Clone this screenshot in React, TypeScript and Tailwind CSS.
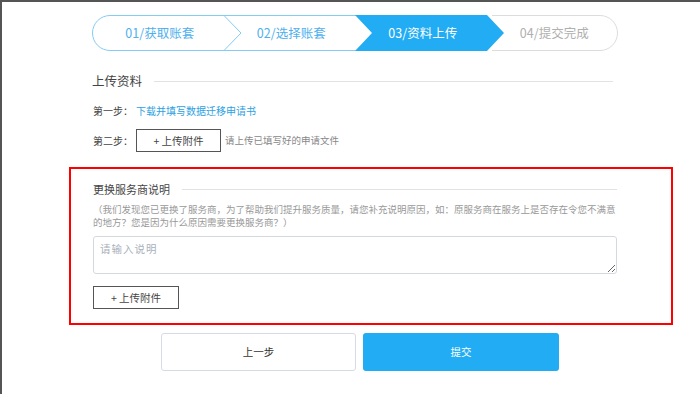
const font = { fontFamily: '"Noto Sans CJK SC", "Noto Sans", sans-serif' }

const steps = [
  { label: '01/获取账套', cls: 'text-[#4fb0ee]' },
  { label: '02/选择账套', cls: 'text-[#4fb0ee]' },
  { label: '03/资料上传', cls: 'text-white' },
  { label: '04/提交完成', cls: 'text-[#b0b0b0]' },
]

const Stepper = () => (
  <div className="relative w-[526px] h-[36px]">
    {/* chevron background */}
    <svg className="absolute inset-0" width="526" height="36" viewBox="0 0 526 36" fill="none">
      <path d="M265 0.5 H18 A17.5 17.5 0 0 0 18 35.5 H265" stroke="#84cbf5" />
      <path d="M132 0.5 L149 18 L132 35.5" stroke="#84cbf5" />
      <path d="M263 0 H395 L412 18 L395 36 H263 L280 18 Z" fill="#21acf3" />
      <path d="M400 0.5 H508 A17.5 17.5 0 0 1 508 35.5 H400" stroke="#dcdcdc" />
    </svg>
    <div className="relative flex h-full">
      {steps.map((s) => (
        <div key={s.label} className={`flex-1 flex items-center justify-center pl-1 text-[12.5px] ${s.cls}`}>
          {s.label}
        </div>
      ))}
    </div>
  </div>
)

const SectionTitle = ({ title, size }: { title: string; size: string }) => (
  <div className="flex items-center gap-3">
    <span className={`${size} text-[#444] whitespace-nowrap`}>{title}</span>
    <div className="flex-1 h-px bg-[#e2e2e2]" />
  </div>
)

export default function App() {
  return (
    <div style={font} className="w-[700px] h-[394px] overflow-hidden bg-white border-t-2 border-l-2 border-[#555]">
      <div className="ml-[90px] w-[526px] pt-[13px]">
        <Stepper />

        <div className="mt-[22px] w-[521px]">
          <SectionTitle title="上传资料" size="text-[12.5px] leading-[16px]" />
        </div>

        <div className="mt-[15px] flex items-center text-[10px] leading-[14px]">
          <span className="text-[#444] w-[44px] pl-[1px]">第一步：</span>
          <span className="text-[#2d9fe3]">下载并填写数据迁移申请书</span>
        </div>

        <div className="mt-[11px] flex items-center">
          <span className="text-[10px] text-[#444] w-[44px] pl-[1px]">第二步：</span>
          <button className="w-[85px] h-[23px] border border-[#555] bg-white text-[10.5px] text-[#444]">+ 上传附件</button>
          <span className="ml-[4px] text-[9.5px] text-[#888]">请上传已填写好的申请文件</span>
        </div>
      </div>

      <div className="mt-[15px] ml-[67px] w-[604px] border-2 border-[#f00] pl-[22px] pt-[13px] pb-[14px]">
        <div className="w-[524px]">
          <SectionTitle title="更换服务商说明" size="text-[11px] leading-[14px]" />
          <p className="mt-[7px] text-[9.5px] leading-[13px] text-[#999] whitespace-nowrap">
            （我们发现您已更换了服务商，为了帮助我们提升服务质量，请您补充说明原因，如：原服务商在服务上是否存在令您不满意
            <br />
            的地方？您是因为什么原因需要更换服务商？）
          </p>
          <textarea
            placeholder="请输入说明"
            className="mt-[7px] block w-[524px] h-[38px] border border-[#d4d9e0] rounded-[3px] px-[6px] py-[4px] text-[10.5px] tracking-[1px] placeholder:text-[#a9b0ba] outline-none"
          />
          <button className="mt-[12px] w-[86px] h-[23px] border border-[#555] bg-white text-[10.5px] text-[#444]">+ 上传附件</button>
        </div>
      </div>

      <div className="mt-[8px] ml-[159px] flex gap-[7px]">
        <button className="w-[195px] h-[38px] border border-[#d4dbe5] rounded-[3px] bg-white text-[10.5px] text-[#333]">上一步</button>
        <button className="w-[196px] h-[38px] rounded-[3px] bg-[#21acf3] text-[10.5px] text-white">提交</button>
      </div>
    </div>
  )
}
